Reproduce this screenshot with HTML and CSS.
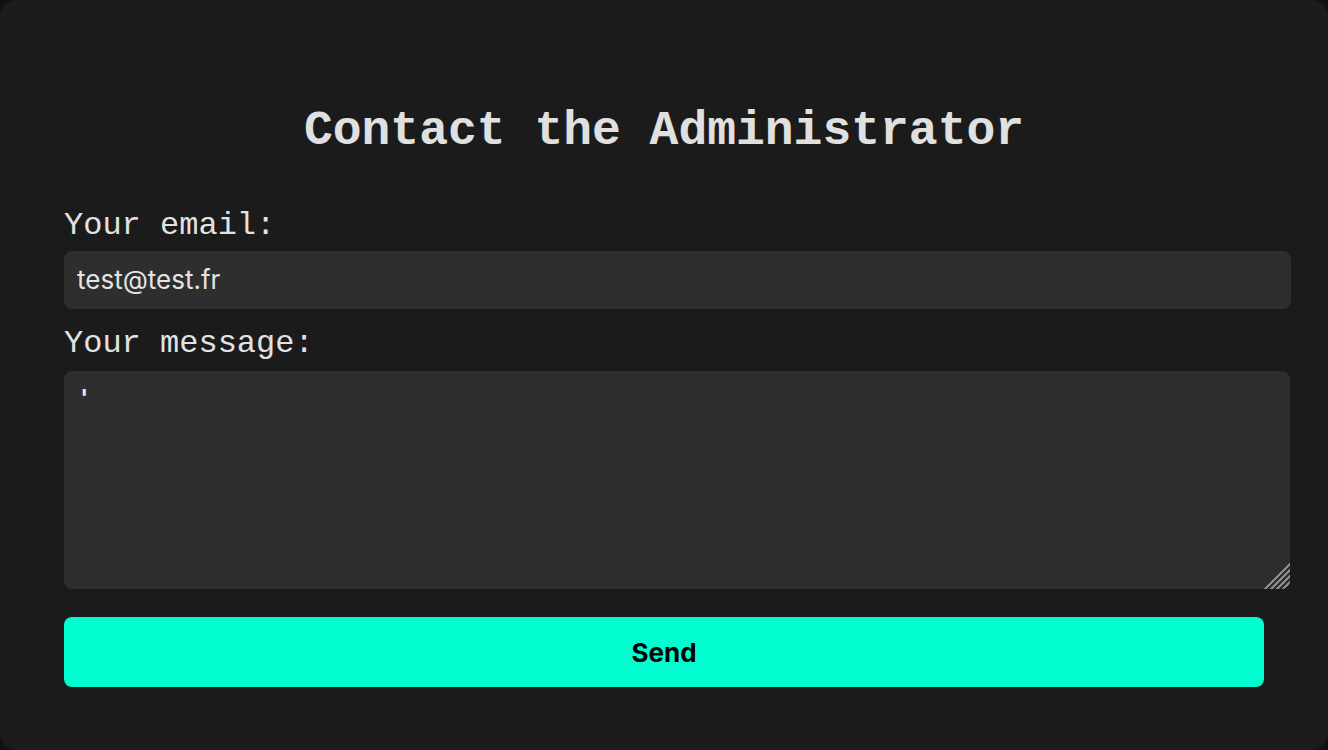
FILE: index.html
```html
<!DOCTYPE html>
<html lang="en">
<head>
<meta charset="utf-8">
<title>Contact the Administrator</title>
<link rel="stylesheet" href="styles.css">
</head>
<body>
<main class="card">
  <h1 class="title">Contact the Administrator</h1>
  <form class="form">
    <label class="label label-email" for="email">Your email:</label>
    <input class="field field-email" id="email" type="email" value="test@test.fr">
    <label class="label label-message" for="message">Your message:</label>
    <div class="area-wrap">
      <textarea class="field field-message" id="message">'</textarea>
      <span class="resizer"></span>
    </div>
    <button class="send" type="button">Send</button>
  </form>
</main>
</body>
</html>
```

FILE: styles.css
```css
* { margin: 0; }
html, body { height: 100%; }
body {
  background: #111111;
  overflow: hidden;
}
.card {
  box-sizing: border-box;
  height: 750px;
  background: #1b1b1b;
  border-radius: 16px;
  padding: 104px 64px 63px;
  display: flex;
  flex-direction: column;
}
.title {
  font-family: "Liberation Mono", "Courier New", monospace;
  font-weight: 700;
  font-size: 48px;
  line-height: 54px;
  color: #e0e0e0;
  text-align: center;
}
.form {
  margin-top: 50px;
  display: flex;
  flex-direction: column;
  align-items: flex-start;
}
.label {
  display: block;
  font-family: "Liberation Mono", "Courier New", monospace;
  font-size: 32px;
  line-height: 36px;
  color: #e2e2e2;
}
.label-email { margin-bottom: 7px; }
.label-message { margin-top: 17px; margin-bottom: 9px; }
.field {
  box-sizing: content-box;
  width: 1200px;
  padding: 12px;
  border: 1px solid #2e2e2e;
  border-radius: 8px;
  background: #2e2e2e;
  color: #e4e4e4;
  outline: none;
}
.field-email {
  width: 1201px;
  height: 32px;
  font-family: Inter, "Noto Sans", sans-serif;
  font-size: 26px;
  line-height: 32px;
}
.area-wrap {
  position: relative;
  display: flex;
}
.field-message {
  height: 192px;
  resize: none;
  font-family: "DejaVu Sans Mono", monospace;
  font-weight: 700;
  font-size: 24px;
  line-height: 30px;
}
.resizer {
  position: absolute;
  right: 0;
  bottom: 0;
  width: 27px;
  height: 27px;
  border-bottom-right-radius: 8px;
  background: linear-gradient(135deg,
    transparent 0 51%,
    #8c8c8c 51% 56%, transparent 56% 62%,
    #8c8c8c 62% 67%, transparent 67% 73%,
    #8c8c8c 73% 78%, transparent 78% 84%,
    #8c8c8c 84% 89%, transparent 89% 100%);
}
.send {
  margin-top: 28px;
  width: 1200px;
  height: 70px;
  border: none;
  border-radius: 8px;
  background: #00ffd0;
  color: #000;
  font-family: Inter, "Noto Sans", sans-serif;
  font-weight: 700;
  font-size: 26px;
  cursor: pointer;
}
```
